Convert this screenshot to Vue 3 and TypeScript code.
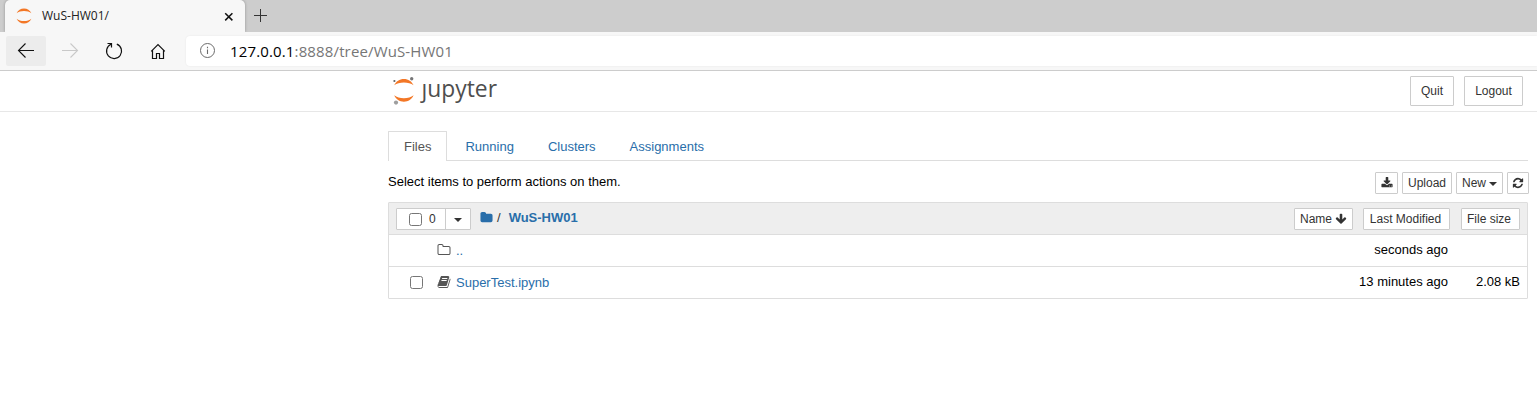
<script setup lang="ts">
const tabs = ['Files', 'Running', 'Clusters', 'Assignments']
const icons = {
  download: 'M1344 1344q0-26-19-45t-45-19-45 19-19 45 19 45 45 19 45-19 19-45zm256 0q0-26-19-45t-45-19-45 19-19 45 19 45 45 19 45-19 19-45zm128-224v320q0 40-28 68t-68 28h-1472q-40 0-68-28t-28-68v-320q0-40 28-68t68-28h465l135 136q58 56 136 56t136-56l136-136h464q40 0 68 28t28 68zm-325-569q17 41-14 70l-448 448q-18 19-45 19t-45-19l-448-448q-31-29-14-70 17-39 59-39h256v-448q0-26 19-45t45-19h256q26 0 45 19t19 45v448h256q42 0 59 39z',
  refresh: 'M1639 1056q0 5-1 7-64 268-268 434.500t-478 166.500q-146 0-282.500-55t-243.500-157l-129 129q-19 19-45 19t-45-19-19-45v-448q0-26 19-45t45-19h448q26 0 45 19t19 45-19 45l-137 137q71 66 161 102t187 36q134 0 250-65t186-179q11-17 53-117 8-23 30-23h192q13 0 22.500 9.500t9.500 22.500zm25-800v448q0 26-19 45t-45 19h-448q-26 0-45-19t-19-45 19-45l138-138q-148-137-349-137-134 0-250 65t-186 179q-11 17-53 117-8 23-30 23h-199q-13 0-22.500-9.500t-9.500-22.500v-7q65-268 270-434.500t480-166.500q146 0 284 55.500t245 156.500l130-129q19-19 45-19t45 19 19 45z',
  folder: 'M1728 608v704q0 92-66 158t-158 66h-1216q-92 0-158-66t-66-158v-960q0-92 66-158t158-66h320q92 0 158 66t66 158v32h672q92 0 158 66t66 158z',
  folderOpen: 'M1600 1312v-704q0-40-28-68t-68-28h-704q-40 0-68-28t-28-68v-64q0-40-28-68t-68-28h-320q-40 0-68 28t-28 68v960q0 40 28 68t68 28h1216q40 0 68-28t28-68zm128-704v704q0 92-66 158t-158 66h-1216q-92 0-158-66t-66-158v-960q0-92 66-158t158-66h320q92 0 158 66t66 158v32h672q92 0 158 66t66 158z',
  book: 'M1703 478q40 57 18 129l-275 906q-19 64-76.500 107.500t-122.500 43.500h-923q-77 0-148.500-53.500t-99.500-131.500q-24-67-2-127 0-4 3-27t4-37q1-8-3-21.500t-3-19.500q2-11 8-21t16.500-23.500 16.500-23.500q23-38 45-91.500t30-91.500q3-10 .5-30t-.5-28q3-11 17-28t17-23q21-36 42-92t25-90q1-9-2.500-32t.5-28q4-13 22-30.500t22-22.500q19-26 42.500-84.500t27.500-96.500q1-8-3-25.500t-2-26.500q2-8 9-18t18-23 17-21q8-12 16.500-30.500t15-35 16-36 19.500-32 26.500-23.500 36-11.500 47.500 5.500l-1 3q38-9 51-9h761q74 0 114 56t18 130l-274 906q-36 119-71.500 153.500t-128.500 34.500h-869q-27 0-38 15-11 16-1 43 24 70 144 70h923q29 0 56-15.500t35-41.500l300-987q7-22 5-57 38 15 59 43zm-1064 2q-4 13 2 22.500t20 9.500h608q13 0 25.500-9.500t16.500-22.500l21-64q4-13-2-22.500t-20-9.500h-608q-13 0-25.500 9.500t-16.500 22.500zm-83 256q-4 13 2 22.500t20 9.500h608q13 0 25.500-9.500t16.500-22.500l21-64q4-13-2-22.500t-20-9.500h-608q-13 0-25.500 9.500t-16.500 22.500z',
  arrowDown: 'M1675 832q0 53-37 90l-651 652q-39 37-91 37-53 0-90-37l-651-652q-38-36-38-90 0-53 38-91l74-75q39-37 91-37 53 0 90 37l294 294v-704q0-52 38-90t90-38h128q52 0 90 38t38 90v704l294-294q37-37 90-37 52 0 91 37l75 75q37 39 37 91z',
}
</script>

<template>
  <div class="window">
    <div class="tabstrip">
      <div class="browser-tab">
        <svg class="favicon" width="16" height="16" viewBox="0 0 16 16" fill="#f37726">
          <path d="M.6 5.300C2 2.300 4.700.5 8 .5s6 1.800 7.400 4.800C13.500 3.700 11 3 8 3S2.500 3.700.6 5.300z" />
          <path d="M.6 10.700C2 13.700 4.700 15.500 8 15.500s6-1.800 7.400-4.800C13.500 12.300 11 13 8 13s-5.500-.7-7.400-2.300z" />
        </svg>
        <span class="tab-title">WuS-HW01/</span>
        <svg class="tab-close" width="10" height="10" viewBox="0 0 10 10" fill="none" stroke="#111" stroke-width="1.500">
          <path d="M1.200 1.200l7.200 7.200M8.400 1.200L1.200 8.400" />
        </svg>
      </div>
      <svg class="new-tab" width="14" height="14" viewBox="0 0 14 14" fill="none" stroke="#333">
        <path d="M6.500 0v13M0 6.500h13" />
      </svg>
    </div>

    <div class="navbar">
      <div class="nav-btn back">
        <svg width="18" height="16" viewBox="0 0 18 16" fill="none" stroke="#111" stroke-width="1.100">
          <path d="M17 8.500H1.500M8.500 1.500l-7 7 7 7" />
        </svg>
      </div>
      <div class="nav-btn forward">
        <svg width="18" height="16" viewBox="0 0 18 16" fill="none" stroke="#c9c9c9" stroke-width="1.100">
          <path d="M1 8.500h15.500M9.500 1.500l7 7-7 7" />
        </svg>
      </div>
      <div class="nav-btn reload">
        <svg width="18" height="18" viewBox="0 0 18 18" fill="none" stroke="#111" stroke-width="1.200">
          <path d="M11.800 2.100A7.500 7.500 0 1 1 5.900 2.300M2.500 1.500h4v4" />
        </svg>
      </div>
      <div class="nav-btn home">
        <svg width="16" height="17" viewBox="0 0 16 17" fill="none" stroke="#111" stroke-width="1.200">
          <path d="M1.200 8.300L8 1.500l6.800 6.800M2.500 7.100v8.400h4v-5h3v5h4V7.100" />
        </svg>
      </div>
      <div class="address">
        <svg width="16" height="16" viewBox="0 0 16 16" fill="none" stroke="#6b6b6b">
          <circle cx="8.500" cy="7.500" r="7" />
          <path d="M8.500 6.500v4.500M8.500 3.800v1.400" stroke-width="1.100" />
        </svg>
        <span class="url"><b>127.0.0.1</b>:8888/tree/WuS-HW01</span>
      </div>
    </div>

    <header class="header">
      <svg class="logo" width="112" height="36" viewBox="0 0 112 36">
        <g fill="#f37726">
          <path d="M3.200 10.300C5 6.400 8.500 4 12.900 4s7.900 2.400 9.700 6.300C20.100 8.300 16.800 7.500 12.900 7.500s-7.200.8-9.700 2.800z" />
          <path d="M3.200 20.300c1.800 3.900 5.300 6.400 9.700 6.400s7.900-2.500 9.700-6.400c-2.500 2-5.800 2.900-9.700 2.900s-7.200-.9-9.700-2.900z" />
        </g>
        <circle cx="20.700" cy="3.800" r="1.700" fill="#767677" />
        <circle cx="3.400" cy="6" r="1.100" fill="#616262" />
        <circle cx="5" cy="27.600" r="2.100" fill="#9e9e9e" />
        <text x="30.500" y="22" textLength="75.500" lengthAdjust="spacingAndGlyphs">ȷupyter</text>
      </svg>
      <div class="session">
        <button class="btn">Quit</button>
        <button class="btn">Logout</button>
      </div>
    </header>

    <main class="main">
      <nav class="tabs">
        <a v-for="(tab, i) in tabs" :key="tab" class="tab" :class="{ active: i === 0 }">{{ tab }}</a>
      </nav>

      <div class="toolbar">
        <span class="hint">Select items to perform actions on them.</span>
        <div class="tools">
          <button class="btn xs download"><svg class="fa" viewBox="0 0 1792 1792"><path :d="icons.download" /></svg></button>
          <button class="btn xs upload">Upload</button>
          <button class="btn xs new">New<i class="caret"></i></button>
          <button class="btn xs refresh"><svg class="fa" viewBox="0 0 1792 1792"><path :d="icons.refresh" /></svg></button>
        </div>
      </div>

      <section class="list">
        <div class="row list-header">
          <div class="selector">
            <div class="select-all"><i class="check"></i><span>0</span></div>
            <div class="select-menu"><i class="caret"></i></div>
          </div>
          <div class="crumbs">
            <svg class="fa" viewBox="0 0 1792 1792"><path :d="icons.folder" /></svg>
            <span class="slash">/</span>
            <b>WuS-HW01</b>
          </div>
          <div class="sorts">
            <button class="btn xs name">Name<svg class="fa" viewBox="0 0 1792 1792"><path :d="icons.arrowDown" /></svg></button>
            <button class="btn xs modified">Last Modified</button>
            <button class="btn xs size">File size</button>
          </div>
        </div>
        <div class="row item">
          <span class="check-slot"></span>
          <svg class="fa" viewBox="0 0 1792 1792"><path :d="icons.folderOpen" /></svg>
          <a class="item-name">..</a>
          <span class="when">seconds ago</span>
          <span class="bytes"></span>
        </div>
        <div class="row item">
          <span class="check-slot"><i class="check"></i></span>
          <svg class="fa" viewBox="0 0 1792 1792"><path :d="icons.book" /></svg>
          <a class="item-name">SuperTest.ipynb</a>
          <span class="when">13 minutes ago</span>
          <span class="bytes">2.08 kB</span>
        </div>
      </section>
    </main>
  </div>
</template>

<style>
body { margin: 0; background: #fff; }
</style>

<style scoped>
* { box-sizing: border-box; }
.window { width: 1537px; height: 400px; overflow: hidden; background: #fff; color: #000; font: 13px/20px "Liberation Sans", Arial, sans-serif; }
svg { display: block; flex: none; }
.tabstrip { height: 32px; display: flex; background: #cdcdcd; }
.browser-tab { width: 240px; margin-left: 5px; display: flex; align-items: center; padding: 0 11px; background: #f7f7f7; border-radius: 5px 5px 0 0; box-shadow: 0 0 3px rgba(0, 0, 0, .3); clip-path: inset(0 -4px 0 -4px); }
.tab-title { margin-left: 10px; flex: 1; font: 12px/20px "Open Sans", "Noto Sans", sans-serif; color: #222; }
.tab-close { margin-top: 1px; }
.new-tab { margin: 9px 0 0 9px; }
.navbar { height: 39px; display: flex; align-items: flex-start; padding-top: 4px; background: #f7f7f7; border-bottom: 1px solid #ccc; }
.nav-btn { width: 40px; height: 30px; display: flex; align-items: center; justify-content: center; margin-right: 4px; border-radius: 2px; }
.back { margin-left: 6px; background: #ececec; }
.back svg, .forward svg { margin-top: -2px; }
.home { margin-right: 8px; }
.address { flex: 1; height: 30px; display: flex; align-items: center; padding-left: 13px; background: #fff; border-radius: 4px 0 0 4px; box-shadow: 0 0 2px rgba(0, 0, 0, .08); }
.url { margin-left: 15px; font: 15px/22px "Open Sans", "Noto Sans", sans-serif; letter-spacing: .14px; color: #767676; white-space: nowrap; }
.url b { font-weight: 400; color: #000; }
.header { height: 41px; display: flex; justify-content: space-between; padding: 5px 14px 0 391px; border-bottom: 1px solid #e7e7e7; }
.logo { margin-top: -1px; overflow: visible; }
.logo text { font: 23.500px "Open Sans", "Noto Sans", sans-serif; fill: #4e4e4e; }
.session { display: flex; gap: 10px; }
.btn { display: flex; align-items: center; justify-content: center; height: 30px; margin: 0; padding: 0 10px; border: 1px solid #ccc; border-radius: 1px; background: #fff; color: #333; font: 12px/18px "Liberation Sans", Arial, sans-serif; white-space: nowrap; }
.session .btn:first-child { width: 44px; }
.session .btn:last-child { width: 59px; }
.main { margin-left: 388px; width: 1140px; padding-top: 19px; }
.tabs { height: 30px; display: flex; border-bottom: 1px solid #ddd; }
.tab { height: 30px; margin-right: 2px; padding: 5px 15px 4px; border: 1px solid transparent; border-bottom: 0; color: #296eaa; }
.tab.active { height: 30px; color: #555; border-color: #ddd; background: #fff; border-radius: 1px 1px 0 0; }
.toolbar { height: 41px; display: flex; justify-content: space-between; padding-top: 11px; }
.tools { display: flex; gap: 4px; margin-right: -1px; }
.btn.xs { height: 22px; padding: 0 5px; }
.btn.download { width: 23px; }
.btn.upload { width: 50px; }
.btn.new { width: 47px; }
.btn.refresh { width: 22px; }
.fa { width: 14px; height: 14px; fill: currentColor; }
.btn .fa { width: 12px; height: 12px; }
.download .fa { margin-top: -1px; }
.caret { width: 0; height: 0; border: 4px solid transparent; border-top-color: currentColor; border-bottom: 0; }
.new .caret { margin-left: 3px; margin-top: 2px; }
.list { border: 1px solid #ddd; border-radius: 1px; }
.row { display: flex; height: 32px; border-bottom: 1px solid #ddd; }
.row:last-child { border-bottom: 0; height: 31px; }
.list-header { background: #eee; padding: 5px 7px 0; }
.selector { display: flex; width: 75px; height: 22px; background: #fff; border: 1px solid #ccc; border-radius: 1px; color: #333; font-size: 12px; }
.select-all { width: 49px; display: flex; align-items: center; padding-left: 12px; border-right: 1px solid #ccc; }
.select-all span { margin-left: 7px; }
.select-menu { flex: 1; display: flex; align-items: center; justify-content: center; padding-top: 2px; }
.check { display: block; width: 13px; height: 13px; border: 1px solid #767676; border-radius: 2.500px; background: #fff; }
.crumbs { display: flex; align-items: flex-start; margin-left: 8px; color: #296eaa; flex: 1; line-height: 20px; }
.crumbs .fa { width: 13px; height: 13px; margin: 3px 0 0 1px; }
.slash { margin-left: 4px; color: #333; }
.crumbs b { margin-left: 8px; }
.sorts { display: flex; }
.btn.name { width: 59px; margin-right: 10px; }
.name .fa { margin-left: 3px; }
.btn.modified { width: 87px; margin-right: 11px; padding-right: 7px; }
.btn.size { width: 59px; padding-right: 8px; }
.item { align-items: flex-start; padding: 5px 7px 0 21px; }
.check-slot { width: 27px; padding-top: 4px; }
.item .fa { margin-top: 2.500px; color: #555; }
.item-name { flex: 1; margin: 1px 0 0 5px; color: #296eaa; }
.when { width: 120px; text-align: right; }
.bytes { width: 72px; text-align: right; }
</style>
